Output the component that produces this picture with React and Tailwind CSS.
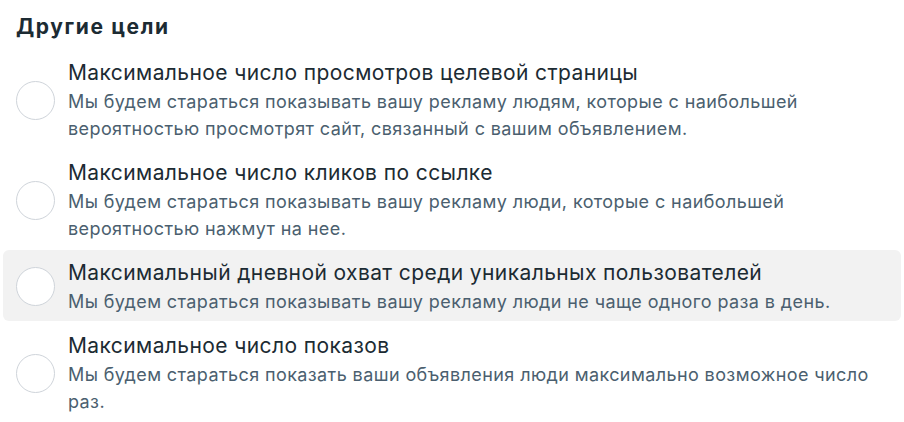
import React, { useState } from 'react';

const goals = [
  {
    id: 'landing',
    title: 'Максимальное число просмотров целевой страницы',
    text: 'Мы будем стараться показывать вашу рекламу людям, которые с наибольшей вероятностью просмотрят сайт, связанный с вашим объявлением.',
  },
  {
    id: 'clicks',
    title: 'Максимальное число кликов по ссылке',
    text: 'Мы будем стараться показывать вашу рекламу люди, которые с наибольшей вероятностью нажмут на нее.',
  },
  {
    id: 'reach',
    title: 'Максимальный дневной охват среди уникальных пользователей',
    text: 'Мы будем стараться показывать вашу рекламу люди не чаще одного раза в день.',
  },
  {
    id: 'impressions',
    title: 'Максимальное число показов',
    text: 'Мы будем стараться показать ваши объявления люди максимально возможное число раз.',
  },
];

const GoalOption = ({ goal, hovered, onHover }) => (
  <label
    onMouseEnter={() => onHover(goal.id)}
    className={`flex items-center gap-[13px] rounded-md pl-[13px] pr-4 pt-2 pb-[6px] cursor-pointer ${
      hovered ? 'bg-[#f2f2f2]' : ''
    }`}
  >
    <span className="shrink-0 w-[39px] h-[39px] rounded-full border border-[#cfd4da] bg-white" />
    <span className="flex flex-col">
      <span className="text-[21px] leading-[30px] tracking-[0.4px] text-[#1c2b33]">{goal.title}</span>
      <span className="text-[18px] leading-[27px] tracking-[0.4px] text-[#4b5f6f]">{goal.text}</span>
    </span>
  </label>
);

export default function App() {
  const [hovered, setHovered] = useState('reach');

  return (
    <div className="w-[904px] h-[422px] bg-white px-[3px] pt-[12px] font-['Inter',sans-serif]">
      <h2 className="px-[13px] text-[21px] leading-[30px] font-bold tracking-[1.6px] text-[#1c2b33]">Другие цели</h2>
      <div className="mt-2 flex flex-col gap-[2px]">
        {goals.map((goal) => (
          <GoalOption
            key={goal.id}
            goal={goal}
            hovered={hovered === goal.id}
            onHover={setHovered}
          />
        ))}
      </div>
    </div>
  );
}
